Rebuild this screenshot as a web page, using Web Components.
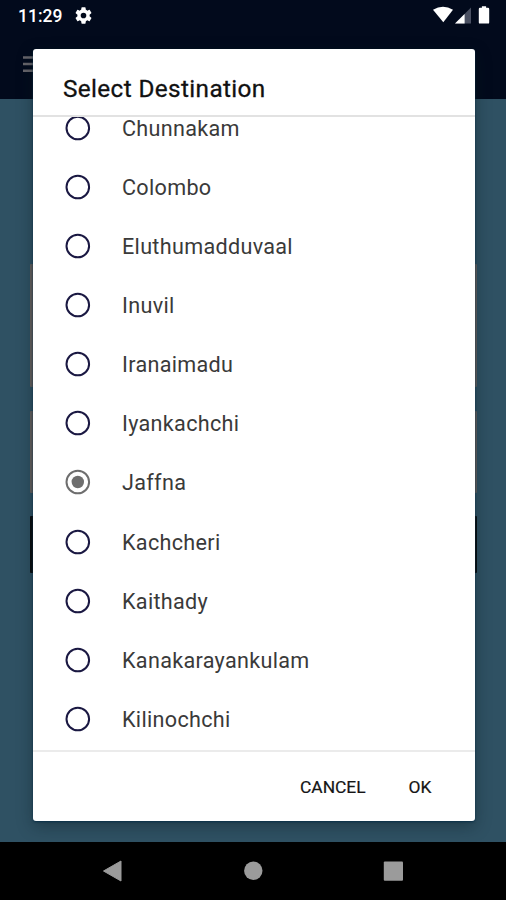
<!DOCTYPE html>
<html lang="en">
<head>
<meta charset="utf-8">
<title>Select Destination</title>
<style>
html,body{margin:0;height:900px;overflow:hidden;background:#2f5163;font-family:Roboto,"Liberation Sans",sans-serif}
</style>
</head>
<body>
<phone-screen></phone-screen>
<script>
const define=(name,html,setup)=>customElements.define(name,class extends HTMLElement{
  constructor(){super();this.attachShadow({mode:'open'});}
  connectedCallback(){this.shadowRoot.innerHTML=html;if(setup)setup(this,this.shadowRoot);}
});

define('status-bar',`<style>
:host{display:flex;height:32px;align-items:center;color:#fff;padding-left:18px}
span{font-size:17.5px;font-weight:500;width:57px;line-height:32px}
svg{display:block}.right{margin-left:auto}
</style><span>11:29</span>
<svg width="17" height="17" viewBox="2 2 20 20" style="margin-top:-1px"><path fill="#fff" d="M19.14 12.94c.04-.3.06-.61.06-.94s-.02-.64-.07-.94l2.03-1.58a.49.49 0 0 0 .12-.61l-1.92-3.32a.49.49 0 0 0-.59-.22l-2.39.96a7 7 0 0 0-1.62-.94l-.36-2.54a.48.48 0 0 0-.48-.41h-3.84a.48.48 0 0 0-.47.41l-.36 2.54c-.59.24-1.13.57-1.62.94l-2.39-.96a.48.48 0 0 0-.59.22L2.74 8.87a.48.48 0 0 0 .12.61l2.03 1.58a7.7 7.7 0 0 0 0 1.88l-2.03 1.58a.49.49 0 0 0-.12.61l1.92 3.32c.12.22.37.29.59.22l2.39-.96c.5.38 1.03.7 1.62.94l.36 2.54c.05.24.24.41.48.41h3.84c.24 0 .44-.17.47-.41l.36-2.54a7 7 0 0 0 1.62-.94l2.39.96c.22.08.47 0 .59-.22l1.92-3.32a.48.48 0 0 0-.12-.61zM12 15.3a3.3 3.3 0 1 1 0-6.6 3.3 3.3 0 0 1 0 6.6z"/></svg>
<svg class="right" width="76" height="32" viewBox="430 0 76 32"><path fill="#fff" d="M433 9.8Q443 3.8 453 9.8L443.3 22.2z"/><path fill="#4a5062" d="M471 7.5V23.5H455z"/><path fill="#fff" d="M464.6 13.9V23.5H455z"/><path fill="#fff" d="M478.8 9q0-1.2 1.2-1.2h1.9V6.2h4.2v1.6h1.9q1.2 0 1.2 1.2v13.4q0 1.2-1.2 1.2H480q-1.2 0-1.2-1.2z"/></svg>`);

define('app-bar',`<style>
:host{display:block;height:67px;padding:24px 0 0 23px;box-sizing:border-box}
svg{display:block}</style>
<svg width="22" height="18"><path d="M0 1.5H22M0 8H22M0 14.7H22" stroke="#67656b" stroke-width="2.4"/></svg>`);

define('app-page',`<style>
:host{display:flex;flex-direction:column;flex:1;padding:165px 29px 0 30px;background:#2f5163}
i{display:block;background:#65615f;border-radius:1px}
.a{height:123px}.b{height:82px;margin-top:24px}.c{height:57px;margin-top:23px;background:#080b0d}
</style><i class="a"></i><i class="b"></i><i class="c"></i>`);

define('radio-option',`<style>
:host{display:flex;align-items:center;height:59.06px;padding-left:32px;flex:none}
svg{display:block;margin-right:31px}
span{font-size:21.6px;color:#3a3a3a;white-space:pre;letter-spacing:.31px;line-height:26px;transform:translateY(1.3px)}
</style><svg width="26" height="26" viewBox="0 0 26 26"></svg><span><slot></slot></span>`,(host,r)=>{
  const on=host.hasAttribute('checked'),c=on?'#6e6e6e':'#1a1842';
  r.querySelector('svg').innerHTML=`<circle cx="12.8" cy="13" r="11.3" fill="none" stroke="${c}" stroke-width="2"/>`+(on?`<circle cx="12.8" cy="13" r="6.2" fill="${c}"/>`:'');
});

define('dialog-button',`<style>
:host{display:block;font-size:17.4px;font-weight:400;-webkit-text-stroke:.2px #151515;color:#151515;line-height:24px}
</style><slot></slot>`);

define('select-dialog',`<style>
:host{display:flex;flex-direction:column;width:441.5px;height:772px;background:#fff;border-radius:3px;box-shadow:0 1px 2px #0a3048,0 5px 16px rgba(10,25,30,.4);overflow:hidden}
header{height:67.2px;box-sizing:border-box;padding:25px 0 0 30px;font-size:24.3px;line-height:30px;color:#111;-webkit-text-stroke:.3px #111;letter-spacing:.38px;border-bottom:2px solid #e2e2e2;flex:none}
main{height:633.5px;overflow:hidden;display:flex;flex-direction:column;flex:none}
.rows{margin-top:-17.9px}
footer{flex:1;border-top:2px solid #ebebeb;display:flex;justify-content:flex-end;gap:43px;padding:23px 43px 0 0}
</style><header><slot name="title"></slot></header><main><div class="rows"><slot></slot></div></main><footer><slot name="actions"></slot></footer>`);

define('nav-bar',`<style>
:host{display:flex;height:58px;background:#000;justify-content:center}svg{display:block}
</style><svg width="506" height="58" viewBox="0 842 506 58" fill="#9b9b9b"><path d="M103.5 871 121 861V881z" stroke="#9b9b9b" stroke-linejoin="round"/><circle cx="253.3" cy="870.8" r="9.2"/><rect x="383.8" y="861.5" width="19.2" height="19.3" rx="1"/></svg>`);

define('phone-screen',`<style>
:host{display:flex;flex-direction:column;height:900px;width:506px;position:relative;background:#020a1c}
.overlay{position:absolute;left:33px;top:49.4px}
</style><status-bar></status-bar><app-bar></app-bar><app-page></app-page><nav-bar></nav-bar>
<div class="overlay"><select-dialog><span slot="title">Select Destination</span>
<radio-option>Chunnakam</radio-option><radio-option>Colombo</radio-option><radio-option>Eluthumadduvaal</radio-option><radio-option>Inuvil</radio-option><radio-option>Iranaimadu</radio-option><radio-option>Iyankachchi</radio-option><radio-option checked>Jaffna</radio-option><radio-option>Kachcheri</radio-option><radio-option>Kaithady</radio-option><radio-option>Kanakarayankulam</radio-option><radio-option>Kilinochchi</radio-option>
<dialog-button slot="actions">CANCEL</dialog-button><dialog-button slot="actions">OK</dialog-button></select-dialog></div>`);
</script>
</body>
</html>
